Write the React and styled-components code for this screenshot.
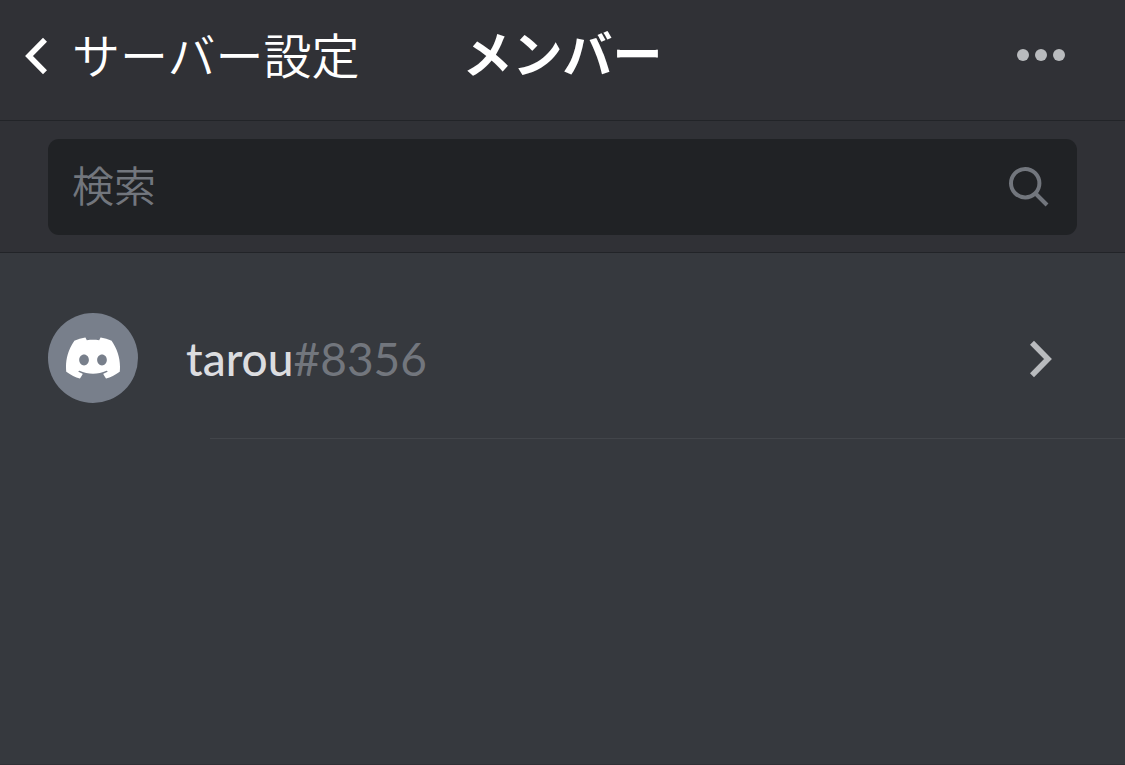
import React, { useState } from 'react';
import styled, { createGlobalStyle, ThemeProvider } from 'styled-components';
import { SiDiscord } from 'react-icons/si';

const theme = {
  header: '#303136',
  body: '#36393e',
  field: '#202225',
  line: '#222428',
  divider: '#42454a',
  bright: '#ffffff',
  text: '#dcdde0',
  icon: '#b9bbbe',
  muted: '#72767d',
  avatar: '#787f8b',
};

const GlobalStyle = createGlobalStyle`
  * {
    box-sizing: border-box;
  }
  body {
    margin: 0;
    background-color: ${(props) => props.theme.body};
    font-family: 'Noto Sans CJK JP', 'Noto Sans', sans-serif;
  }
  button, input {
    font-family: inherit;
  }
`;

const Screen = styled.div`
  min-height: 100vh;
  background-color: ${(props) => props.theme.body};
  border-bottom: 1px solid ${(props) => props.theme.header};
`;

const HeaderBar = styled.header`
  display: grid;
  grid-template-columns: 1fr auto 1fr;
  align-items: center;
  padding: 0 24px 10px;
  min-height: 121px;
  background-color: ${(props) => props.theme.header};
  border-bottom: 1px solid ${(props) => props.theme.line};
`;

const BackLink = styled.a`
  display: flex;
  align-items: center;
  gap: 22px;
  color: ${(props) => props.theme.bright};
  text-decoration: none;
`;

const BackLabel = styled.span`
  padding-bottom: 4px;
  font-size: 48px;
  font-weight: 350;
  line-height: 72px;
  white-space: nowrap;
`;

const Title = styled.h1`
  margin: 0;
  padding-bottom: 8px;
  color: ${(props) => props.theme.bright};
  font-size: 50px;
  font-weight: 700;
  line-height: 72px;
`;

const IconButton = styled.button`
  display: flex;
  justify-self: end;
  margin-right: 36px;
  padding: 0;
  border: 0;
  background: none;
  color: ${(props) => props.theme.icon};
  cursor: pointer;
`;

const SearchBar = styled.form`
  padding: 18px 48px 17px;
  background-color: ${(props) => props.theme.header};
  border-bottom: 1px solid ${(props) => props.theme.line};
`;

const SearchField = styled.label`
  display: flex;
  align-items: center;
  height: 96px;
  padding: 0 28px 0 24px;
  border-radius: 11px;
  background-color: ${(props) => props.theme.field};
  color: ${(props) => props.theme.muted};
`;

const SearchInput = styled.input`
  flex: 1;
  min-width: 0;
  height: 72px;
  padding: 0 0 8px;
  border: 0;
  outline: 0;
  background: none;
  color: ${(props) => props.theme.text};
  font-size: 42px;
  font-weight: 350;
  &::placeholder {
    color: ${(props) => props.theme.muted};
    opacity: 1;
  }
`;

const MemberList = styled.ul`
  margin: 0;
  padding: 25px 0 0;
  list-style: none;
`;

const MemberItem = styled.li`
  &::after {
    content: '';
    display: block;
    height: 1px;
    margin-left: 210px;
    background-color: ${(props) => props.theme.divider};
  }
`;

const MemberLink = styled.a`
  display: flex;
  align-items: center;
  min-height: 160px;
  padding: 0 72px 0 48px;
  color: ${(props) => props.theme.icon};
  text-decoration: none;
`;

const Avatar = styled.span`
  display: flex;
  align-items: center;
  justify-content: center;
  flex: none;
  width: 90px;
  height: 90px;
  border-radius: 50%;
  background-color: ${(props) => props.theme.avatar};
  color: ${(props) => props.theme.bright};
`;

const MemberName = styled.span`
  flex: 1;
  padding: 2px 0 0 48px;
  color: ${(props) => props.theme.text};
  font-family: Lato, 'Noto Sans CJK JP', sans-serif;
  font-size: 46px;
  font-weight: 500;
  line-height: 68px;
`;

const MemberTag = styled.span`
  color: ${(props) => props.theme.muted};
  font-weight: 400;
`;

const Chevron = ({ back }) => (
  <svg width="26" height="40" viewBox="0 0 26 40" fill="none" stroke="currentColor" strokeWidth="5.6" aria-hidden="true">
    <path d={back ? 'M21 4.7 5 21l16 16.3' : 'M5 4.7 21 21 5 37.3'} />
  </svg>
);

const Dots = () => (
  <svg width="48" height="12" viewBox="0 0 48 12" fill="currentColor" aria-hidden="true">
    <circle cx="6" cy="6" r="6" />
    <circle cx="24" cy="6" r="6" />
    <circle cx="42" cy="6" r="6" />
  </svg>
);

const Magnifier = () => (
  <svg width="40" height="40" viewBox="0 0 40 40" fill="none" stroke="currentColor" strokeWidth="4" aria-hidden="true">
    <circle cx="16.2" cy="16.2" r="14.2" />
    <path d="M26 26 38 38" />
  </svg>
);

const members = [{ name: 'tarou', tag: '#8356' }];

export default function App() {
  const [query, setQuery] = useState('');
  const shown = members.filter((member) => member.name.includes(query));

  return (
    <ThemeProvider theme={theme}>
      <GlobalStyle />
      <Screen>
        <HeaderBar>
          <BackLink href="#settings">
            <Chevron back />
            <BackLabel>サーバー設定</BackLabel>
          </BackLink>
          <Title>メンバー</Title>
          <IconButton type="button" aria-label="その他">
            <Dots />
          </IconButton>
        </HeaderBar>
        <SearchBar onSubmit={(e) => e.preventDefault()}>
          <SearchField>
            <SearchInput
              type="text"
              aria-label="検索"
              placeholder="検索"
              value={query}
              onChange={(e) => setQuery(e.target.value)}
            />
            <Magnifier />
          </SearchField>
        </SearchBar>
        <MemberList>
          {shown.map((member) => (
            <MemberItem key={member.name}>
              <MemberLink href={`#${member.name}`}>
                <Avatar>
                  <SiDiscord size={54} />
                </Avatar>
                <MemberName>
                  {member.name}
                  <MemberTag>{member.tag}</MemberTag>
                </MemberName>
                <Chevron />
              </MemberLink>
            </MemberItem>
          ))}
        </MemberList>
      </Screen>
    </ThemeProvider>
  );
}
